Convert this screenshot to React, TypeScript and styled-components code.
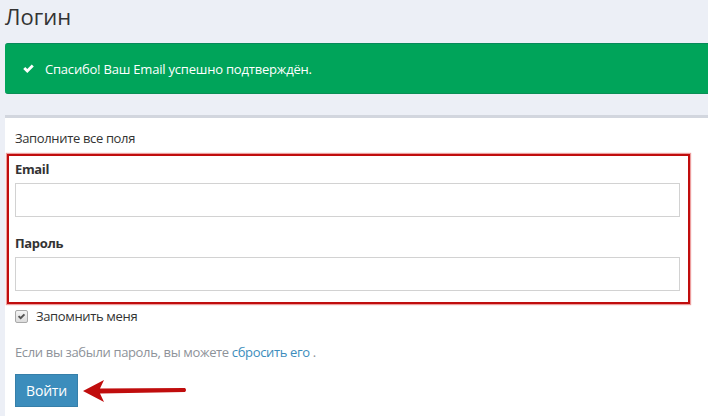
import {FC} from 'react'
import styled, {createGlobalStyle} from 'styled-components'

const COLORS = {
    page: '#eceff6',
    text: '#333333',
    muted: '#8d9299',
    green: '#00a45a',
    blue: '#3c8dbc',
    red: '#c00d0d',
    border: '#d2d6de',
}

const GlobalStyle = createGlobalStyle`
  html, body {
    margin: 0;
    padding: 0;
    background: ${COLORS.page};
    font-family: "Open Sans", "Liberation Sans", sans-serif;
    color: ${COLORS.text};
  }
`

const CheckIcon: FC<{size: number, color: string}> = ({size, color}) => (
    <svg width={size} height={size} viewBox="0 0 16 16">
        <path d="M1.5 8.5 L4 6 L6.5 8.5 L12 3 L14.5 5.5 L6.5 13.5 Z" fill={color}/>
    </svg>
)

const LoginPage: FC = () => {
    return (
        <Page>
            <GlobalStyle/>
            <Title>Логин</Title>
            <Alert>
                <CheckIcon size={13} color="#fff"/>
                <span>Спасибо! Ваш Email успешно подтверждён.</span>
            </Alert>
            <Panel>
                <Hint>Заполните все поля</Hint>
                <Fields>
                    <Label>Email</Label>
                    <Input type="text"/>
                    <Label $gap>Пароль</Label>
                    <Input type="password"/>
                </Fields>
                <RememberRow>
                    <CheckBox><CheckIcon size={9} color="#555"/></CheckBox>
                    <span>Запомнить меня</span>
                </RememberRow>
                <Forgot>
                    Если вы забыли пароль, вы можете <Link href="#">сбросить его</Link> .
                </Forgot>
                <SubmitRow>
                    <Button>Войти</Button>
                    <svg width="104" height="24" viewBox="0 0 104 24">
                        <path d="M0 12 L21 1 L17 9.5 L102 9 Q104 11 102 13 L17 14.5 L21 23 Z" fill={COLORS.red}/>
                    </svg>
                </SubmitRow>
            </Panel>
        </Page>
    )
}

const Page = styled.div`
  padding-left: 5px;
  min-height: 416px;
  box-sizing: border-box;
`

const Title = styled.h1`
  margin: 0;
  padding-top: 1px;
  height: 42px;
  font-size: 22px;
  font-weight: 400;
  line-height: 30px;
`

const Alert = styled.div`
  display: flex;
  align-items: center;
  gap: 10px;
  height: 51px;
  box-sizing: border-box;
  padding: 0 0 0 17px;
  background: ${COLORS.green};
  border-top: 1px solid #08895a;
  border-bottom: 1px solid #0a8f55;
  border-radius: 3px 0 0 3px;
  color: #fff;
  font-size: 13px;
  letter-spacing: -0.2px;
`

const Panel = styled.div`
  margin-top: 21px;
  background: #fff;
  border-top: 3px solid ${COLORS.border};
  padding: 0 18px 10px 10px;
  min-height: 300px;
  font-size: 13px;
  letter-spacing: -0.35px;
`

const Hint = styled.div`
  height: 36px;
  line-height: 40px;
`

const Fields = styled.div`
  margin-left: -8px;
  border: 2px solid ${COLORS.red};
  box-shadow: 0 0 1px 1px rgba(220, 60, 60, 0.5);
  padding: 1px 8px 11px 6px;
`

const Label = styled.div<{$gap?: boolean}>`
  font-weight: 700;
  line-height: 24px;
  margin-top: ${p => p.$gap ? '14px' : '0'};
  margin-bottom: 2px;
`

const Input = styled.input`
  display: block;
  width: 100%;
  height: 34px;
  box-sizing: border-box;
  border: 1px solid #d2d2d2;
  background: #fff;
  outline: none;
`

const RememberRow = styled.label`
  display: flex;
  align-items: center;
  gap: 8px;
  margin-top: 2px;
  height: 20px;
`

const CheckBox = styled.span`
  display: flex;
  align-items: center;
  justify-content: center;
  width: 11px;
  height: 11px;
  border: 1px solid #a9a9a9;
  border-radius: 2px;
  background: linear-gradient(#f4f4f4, #dcdcdc);
`

const Forgot = styled.p`
  margin: 16px 0 0;
  color: ${COLORS.muted};
  line-height: 20px;
`

const Link = styled.a`
  color: ${COLORS.blue};
  text-decoration: none;
`

const SubmitRow = styled.div`
  display: flex;
  align-items: center;
  gap: 5px;
  margin-top: 12px;
`

const Button = styled.button`
  width: 63px;
  height: 33px;
  background: ${COLORS.blue};
  border: 1px solid #367fa9;
  color: #fff;
  font-family: inherit;
  font-size: 14px;
  font-weight: 400;
  letter-spacing: -0.2px;
  padding: 0;
  cursor: pointer;
`

export default LoginPage
